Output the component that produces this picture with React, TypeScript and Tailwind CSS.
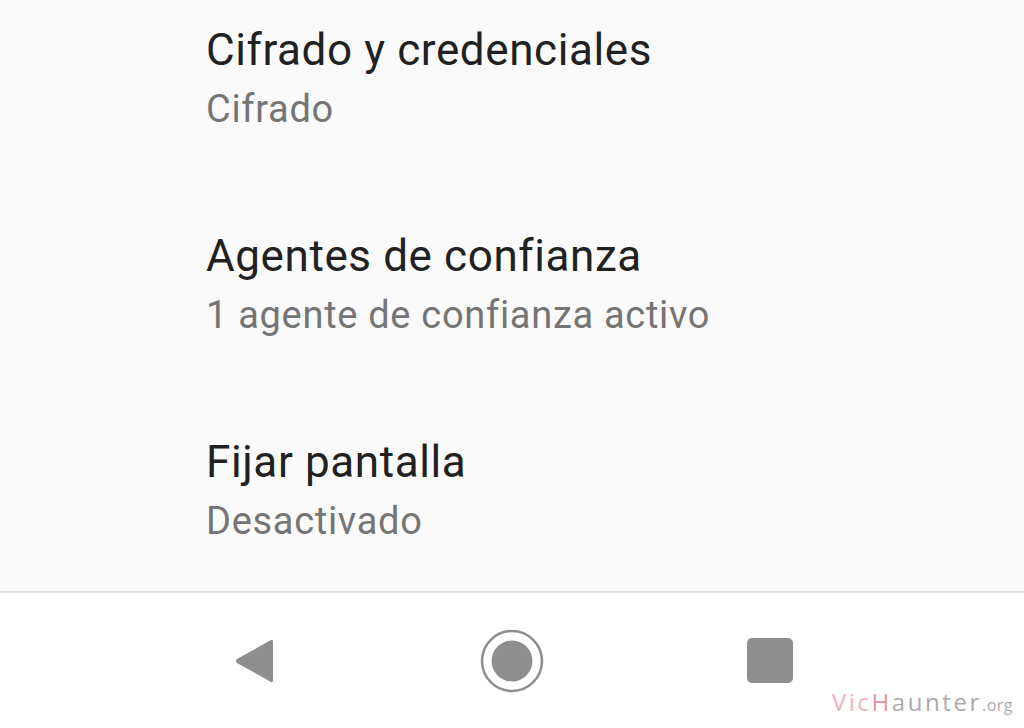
import { ReactNode } from "react";

const Row = ({ title, summary }: { title: string; summary: ReactNode }) => {
  return (
    <div className="flex flex-col gap-[11px]">
      <div className="text-[44px] leading-[52px] tracking-[0.6px] text-[#212121]">{title}</div>
      <div className="text-[38px] leading-[44px] tracking-[0.7px] text-[#757575]">{summary}</div>
    </div>
  );
};

const NavCell = ({ children }: { children: ReactNode }) => (
  <div className="flex w-[258px] items-center justify-center">{children}</div>
);

export default function App() {
  return (
    <div className="relative h-[728px] w-[1024px] overflow-hidden bg-white font-['Roboto',sans-serif]">
      <div className="flex h-[591px] flex-col gap-[99px] bg-[#fafafa] pt-[24px] pl-[206px]">
        <Row title="Cifrado y credenciales" summary="Cifrado" />
        <Row title="Agentes de confianza" summary="1 agente de confianza activo" />
        <Row title="Fijar pantalla" summary="Desactivado" />
      </div>
      <div className="h-[2px] bg-[#dedede]" />
      <div className="flex h-[135px] items-center justify-center bg-white">
        <NavCell>
          <svg width="40" height="46" viewBox="0 0 40 46">
            <path
              d="M37 2 Q39 1 39 4 L39 42 Q39 45 37 44 L3 25 Q1 23 3 21 Z"
              fill="#8e8e8e"
            />
          </svg>
        </NavCell>
        <NavCell>
          <svg width="64" height="64" viewBox="0 0 64 64">
            <circle cx="32" cy="32" r="30" fill="none" stroke="#8e8e8e" strokeWidth="2.5" />
            <circle cx="32" cy="32" r="20.5" fill="#8e8e8e" />
          </svg>
        </NavCell>
        <NavCell>
          <div className="h-[45px] w-[46px] rounded-[5px] bg-[#8e8e8e]" />
        </NavCell>
      </div>
      <div className="absolute right-[11px] bottom-[14px] flex items-baseline font-['Open_Sans',sans-serif] text-[24px] leading-none tracking-[2.6px]">
        <span className="text-[#efb3b9]">Vic</span>
        <span className="text-[#e8939c]">H</span>
        <span className="text-[#ababab]">aunter</span>
        <span className="text-[16px] tracking-[0.5px] text-[#ababab]">.org</span>
      </div>
    </div>
  );
}
